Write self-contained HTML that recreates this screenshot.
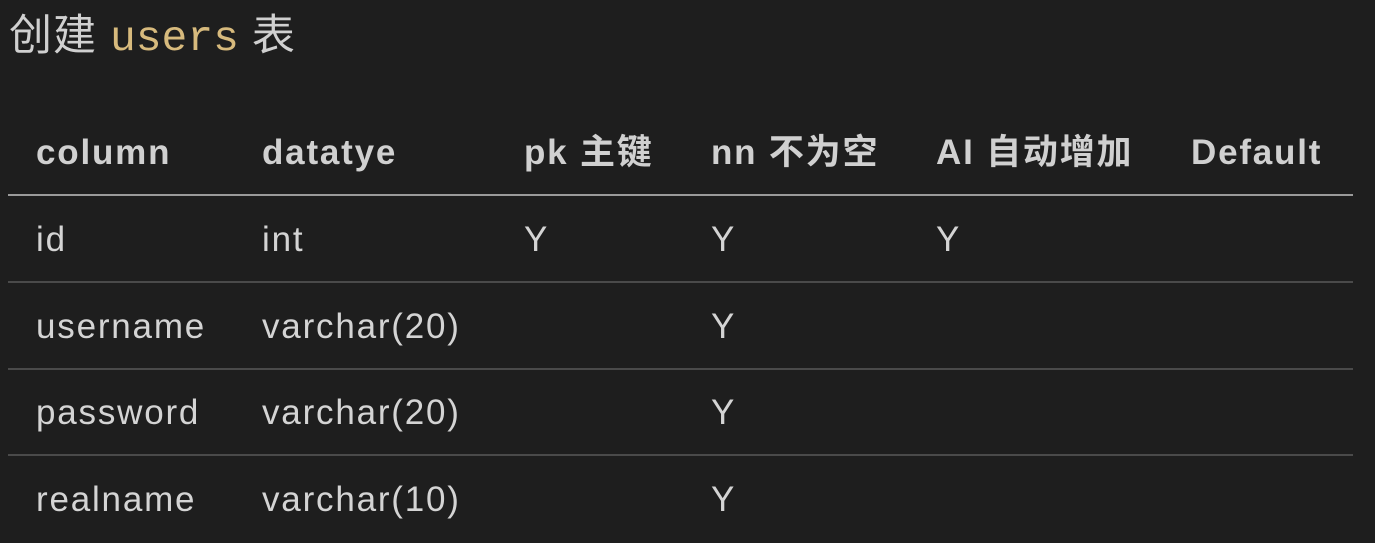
<!DOCTYPE html>
<html><head><meta charset="utf-8"><style>
html,body{margin:0;padding:0;background:#1e1e1e;width:1375px;height:543px;overflow:hidden}
body{position:relative;font-family:"Liberation Sans","Noto Sans CJK SC",sans-serif;color:#d4d4d4}
.t{position:absolute;left:9px;top:6px;font-size:43px;line-height:60px;color:#d0d0d0;white-space:nowrap;letter-spacing:1px}
.t code{font-family:"Liberation Mono",monospace;color:#d7ba7d;font-size:43px;letter-spacing:0}
.c{position:absolute;font-size:35px;letter-spacing:1.8px;line-height:40px;white-space:nowrap}
.h{font-weight:bold;color:#d0d0d0}
.l{position:absolute;left:8px;width:1345px;height:2px;background:#4a4a4a}
</style></head><body>
<div class="t">创建 <code>users</code> 表</div>
<div class="c h" style="left:36px;top:133px">column</div>
<div class="c h" style="left:262px;top:133px">datatye</div>
<div class="c h" style="left:524px;top:133px">pk 主键</div>
<div class="c h" style="left:711px;top:133px">nn 不为空</div>
<div class="c h" style="left:936px;top:133px">AI 自动增加</div>
<div class="c h" style="left:1191px;top:133px">Default</div>
<div class="l" style="top:194px;background:#9a9a9a"></div>
<div class="c" style="left:36px;top:220px">id</div>
<div class="c" style="left:262px;top:220px">int</div>
<div class="c" style="left:524px;top:220px">Y</div>
<div class="c" style="left:711px;top:220px">Y</div>
<div class="c" style="left:936px;top:220px">Y</div>
<div class="l" style="top:281px"></div>
<div class="c" style="left:36px;top:307px">username</div>
<div class="c" style="left:262px;top:307px">varchar(20)</div>
<div class="c" style="left:711px;top:307px">Y</div>
<div class="l" style="top:368px"></div>
<div class="c" style="left:36px;top:393px">password</div>
<div class="c" style="left:262px;top:393px">varchar(20)</div>
<div class="c" style="left:711px;top:393px">Y</div>
<div class="l" style="top:454px"></div>
<div class="c" style="left:36px;top:480px">realname</div>
<div class="c" style="left:262px;top:480px">varchar(10)</div>
<div class="c" style="left:711px;top:480px">Y</div>
</body></html>
